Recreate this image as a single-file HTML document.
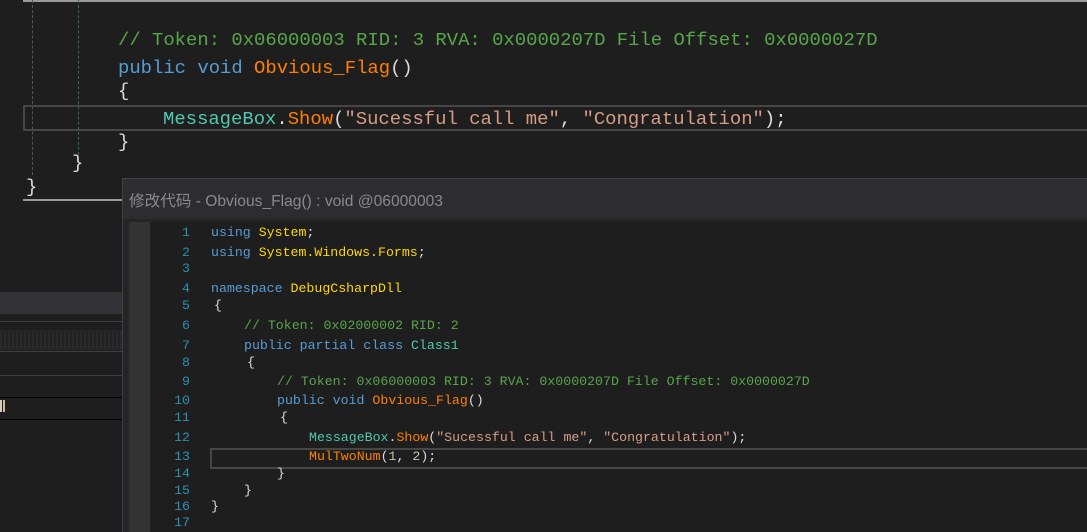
<!DOCTYPE html>
<html><head><meta charset="utf-8"><style>
body{margin:0;width:1087px;height:532px;background:#1e1e1e;overflow:hidden;position:relative;font-family:"Liberation Mono",monospace}
.a{position:absolute;white-space:pre}
.t{font-size:18.9px;line-height:24px}
.d{font-size:13.25px;line-height:16px}
.c{color:#57a64a}.k{color:#569cd6}.m{color:#ff8000}.p{color:#dcdcdc}.s{color:#d69d85}.cl{color:#4ec9b0}.ns{color:#ffd700}.n{color:#b5cea8}
.ln{position:absolute;left:150px;width:40px;text-align:right;color:#2b91af;font-size:13.25px;line-height:16px}
</style></head><body>
<div class="a" style="left:23px;top:0;width:1064px;height:2px;background:#9a9a9a"></div>
<div class="a" style="left:32px;top:0;height:175px;border-left:1px dashed #555"></div>
<div class="a" style="left:78px;top:0;height:155px;border-left:1px dashed #2a6f62"></div>
<div class="a" style="left:23px;top:105px;width:1064px;height:22px;border:2px solid #464646;box-sizing:content-box"></div>
<div class="a t c" style="left:118px;top:28px">// Token: 0x06000003 RID: 3 RVA: 0x0000207D File Offset: 0x0000027D</div>
<div class="a t" style="left:118px;top:56px"><span class="k">public void</span> <span class="m">Obvious_Flag</span><span class="p">()</span></div>
<div class="a t p" style="left:118px;top:79px">{</div>
<div class="a t" style="left:163px;top:107px"><span class="cl">MessageBox</span><span class="p">.</span><span class="m">Show</span><span class="p">(</span><span class="s">"Sucessful call me"</span><span class="p">, </span><span class="s">"Congratulation"</span><span class="p">);</span></div>
<div class="a t p" style="left:118px;top:130px">}</div>
<div class="a t p" style="left:72px;top:151px">}</div>
<div class="a t p" style="left:26px;top:175px">}</div>
<div class="a" style="left:23px;top:199px;width:100px;height:2px;background:#9a9a9a"></div>
<div class="a" style="left:0;top:292px;width:122px;height:22px;background:#333337"></div>
<div class="a" style="left:0;top:321px;width:122px;height:1px;background:#3f3f46"></div>
<div class="a" style="left:0;top:330px;width:122px;height:20px;background:repeating-linear-gradient(90deg,#2a2a2a 0 2px,#222 2px 4px)"></div>
<div class="a" style="left:0;top:351px;width:122px;height:1px;background:#3f3f46"></div>
<div class="a" style="left:0;top:375px;width:122px;height:1px;background:#3f3f46"></div>
<div class="a" style="left:0;top:397px;width:122px;height:1px;background:#000"></div>
<div class="a" style="left:0;top:400px;width:2px;height:12px;background:#ccc"></div>
<div class="a" style="left:3px;top:400px;width:2px;height:12px;background:#d8b890"></div>
<div class="a" style="left:0;top:419px;width:122px;height:1px;background:#000"></div>
<div class="a" style="left:122px;top:178px;width:965px;height:354px;background:#252526;border-left:1px solid #3f3f46"></div>
<div class="a" style="left:123px;top:178px;width:964px;height:40px;background:#2d2d30;border-top:1px solid #3f3f46"></div>
<div class="a" style="left:129px;top:189px;font-family:'Liberation Sans','Noto Sans CJK SC',sans-serif;font-size:15.6px;color:#8a8a8a">修改代码 - Obvious_Flag() : void @06000003</div>
<div class="a" style="left:129px;top:222px;width:958px;height:310px;background:#1e1e1e"></div>
<div class="a" style="left:129px;top:222px;width:21px;height:310px;background:#333333"></div>
<div class="a" style="left:210px;top:448px;width:877px;height:17px;border:2px solid #464646;box-sizing:content-box;border-right:none"></div>
<div class="ln" style="top:225px">1</div><div class="ln" style="top:245px">2</div><div class="ln" style="top:261px">3</div><div class="ln" style="top:281px">4</div><div class="ln" style="top:298px">5</div><div class="ln" style="top:318px">6</div><div class="ln" style="top:338px">7</div><div class="ln" style="top:355px">8</div><div class="ln" style="top:374px">9</div><div class="ln" style="top:393px">10</div><div class="ln" style="top:410px">11</div><div class="ln" style="top:430px">12</div><div class="ln" style="top:449px">13</div><div class="ln" style="top:466px">14</div><div class="ln" style="top:483px">15</div><div class="ln" style="top:499px">16</div><div class="ln" style="top:515px">17</div>
<div class="a d" style="left:211px;top:225px"><span class="k">using</span> <span class="ns">System</span><span class="p">;</span></div>
<div class="a d" style="left:211px;top:245px"><span class="k">using</span> <span class="ns">System.Windows.Forms</span><span class="p">;</span></div>
<div class="a d" style="left:211px;top:281px"><span class="k">namespace</span> <span class="ns">DebugCsharpDll</span></div>
<div class="a d p" style="left:214px;top:298px">{</div>
<div class="a d c" style="left:244px;top:318px">// Token: 0x02000002 RID: 2</div>
<div class="a d" style="left:244px;top:338px"><span class="k">public partial class</span> <span class="cl">Class1</span></div>
<div class="a d p" style="left:247px;top:355px">{</div>
<div class="a d c" style="left:277px;top:374px">// Token: 0x06000003 RID: 3 RVA: 0x0000207D File Offset: 0x0000027D</div>
<div class="a d" style="left:277px;top:393px"><span class="k">public void</span> <span class="m">Obvious_Flag</span><span class="p">()</span></div>
<div class="a d p" style="left:280px;top:410px">{</div>
<div class="a d" style="left:309px;top:430px"><span class="cl">MessageBox</span><span class="p">.</span><span class="m">Show</span><span class="p">(</span><span class="s">"Sucessful call me"</span><span class="p">, </span><span class="s">"Congratulation"</span><span class="p">);</span></div>
<div class="a d" style="left:309px;top:449px"><span class="m">MulTwoNum</span><span class="p">(</span><span class="n">1</span><span class="p">, </span><span class="n">2</span><span class="p">);</span></div>
<div class="a d p" style="left:277px;top:466px">}</div>
<div class="a d p" style="left:244px;top:483px">}</div>
<div class="a d p" style="left:211px;top:499px">}</div>
</body></html>
